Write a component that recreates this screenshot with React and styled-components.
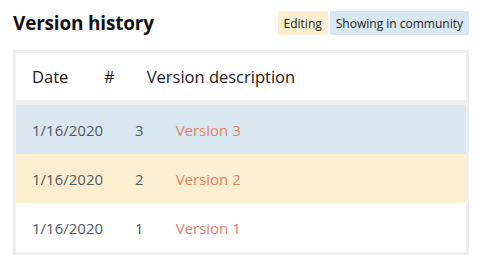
import React from "react";
import styled, { createGlobalStyle } from "styled-components";

const Global = createGlobalStyle`
  html, body { margin: 0; padding: 0; background: #ffffff; }
  body { font-family: "Open Sans", "Noto Sans", sans-serif; }
`;

const Page = styled.div`
  width: 484px;
  height: 274px;
  padding: 11px 15px 0 13px;
  box-sizing: border-box;
`;

const TopBar = styled.div`
  display: flex;
  align-items: center;
  justify-content: space-between;
  height: 24px;
`;

const Title = styled.h1`
  margin: 0;
  font-size: 19px;
  font-weight: 700;
  color: #111111;
  letter-spacing: -0.2px;
`;

const Legend = styled.div`
  display: flex;
  gap: 2px;
`;

const Badge = styled.span`
  display: flex;
  align-items: center;
  height: 24px;
  padding: 0 6px;
  font-size: 12px;
  color: #222222;
  background: ${(p) => p.$bg};
`;

const Table = styled.div`
  margin-top: 15px;
  border: 3px solid #eeeeee;
  background: #ffffff;
`;

const Row = styled.div`
  display: flex;
  align-items: center;
  height: ${(p) => (p.$head ? "47px" : "49px")};
  background: ${(p) => p.$bg || "#ffffff"};
  border-bottom: ${(p) => (p.$head ? "5px solid #eeeeee" : "none")};
`;

const Cell = styled.div`
  padding: 0 16px;
  font-size: ${(p) => (p.$head ? "16.5px" : "15px")};
  font-weight: 400;
  color: ${(p) => (p.$link ? "#e47f6b" : p.$head ? "#1a1a1a" : "#555a60")};
  white-space: nowrap;
  &:first-child { min-width: ${(p) => (p.$head ? "40px" : "0")}; }
`;

const rows = [
  { date: "1/16/2020", n: 3, bg: "#d9e7f0" },
  { date: "1/16/2020", n: 2, bg: "#fcefcf" },
  { date: "1/16/2020", n: 1, bg: "#ffffff" },
];

export default function App() {
  return (
    <>
      <Global />
      <Page>
        <TopBar>
          <Title>Version history</Title>
          <Legend>
            <Badge $bg="#fcefcf">Editing</Badge>
            <Badge $bg="#d9e7f0">Showing in community</Badge>
          </Legend>
        </TopBar>
        <Table>
          <Row $head>
            <Cell $head>Date</Cell>
            <Cell $head>#</Cell>
            <Cell $head>Version description</Cell>
          </Row>
          {rows.map((r) => (
            <Row key={r.n} $bg={r.bg}>
              <Cell>{r.date}</Cell>
              <Cell>{r.n}</Cell>
              <Cell $link>Version {r.n}</Cell>
            </Row>
          ))}
        </Table>
      </Page>
    </>
  );
}
